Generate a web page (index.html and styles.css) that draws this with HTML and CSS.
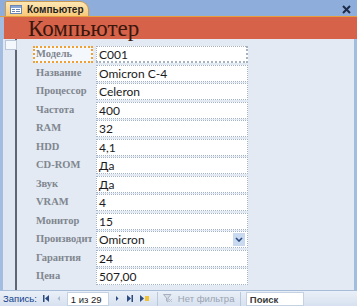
FILE: index.html
```html
<!DOCTYPE html>
<html>
<head>
<meta charset="utf-8">
<title>Компьютер</title>
<link rel="stylesheet" href="styles.css">
</head>
<body>
<div class="window">
  <div class="tabbar">
    <div class="tab">
      <svg class="tab-icon" width="12" height="9" viewBox="0 0 12 9">
        <rect x="0.5" y="0.5" width="11" height="8" fill="#fff" stroke="#6b86b3"/>
        <rect x="1" y="1" width="10" height="2" fill="#8aa6d4"/>
        <rect x="2" y="4" width="3" height="1" fill="#6b86b3"/>
        <rect x="6" y="4" width="4" height="1" fill="#6b86b3"/>
        <rect x="2" y="6" width="3" height="1" fill="#6b86b3"/>
        <rect x="6" y="6" width="4" height="1" fill="#6b86b3"/>
      </svg>
      <span>Компьютер</span>
    </div>
    <svg class="close" width="9" height="9" viewBox="0 0 9 9">
      <path d="M1 1 L8 8 M8 1 L1 8" stroke="#1e2b4a" stroke-width="2"/>
    </svg>
  </div>
  <div class="header">Компьютер</div>
  <div class="body">
    <div class="selector">
      <div class="selector-box"></div>
    </div>
    <div class="form">
      <div class="row"><div class="label active">Модель</div><div class="field first">C001</div></div>
      <div class="row"><div class="label">Название</div><div class="field">Omicron C-4</div></div>
      <div class="row"><div class="label">Процессор</div><div class="field">Celeron</div></div>
      <div class="row"><div class="label">Частота</div><div class="field">400</div></div>
      <div class="row"><div class="label">RAM</div><div class="field">32</div></div>
      <div class="row"><div class="label">HDD</div><div class="field">4,1</div></div>
      <div class="row"><div class="label">CD-ROM</div><div class="field">Да</div></div>
      <div class="row"><div class="label">Звук</div><div class="field">Да</div></div>
      <div class="row"><div class="label">VRAM</div><div class="field">4</div></div>
      <div class="row"><div class="label">Монитор</div><div class="field">15</div></div>
      <div class="row"><div class="label">Производит</div><div class="field combo">Omicron
        <span class="drop"><svg width="8" height="5" viewBox="0 0 8 5"><path d="M1 1 L4 4 L7 1" fill="none" stroke="#2a4a80" stroke-width="1.6"/></svg></span></div></div>
      <div class="row"><div class="label">Гарантия</div><div class="field">24</div></div>
      <div class="row"><div class="label">Цена</div><div class="field">507,00</div></div>
    </div>
  </div>
  <div class="navbar">
    <span class="nav-title">Запись:</span>
    <span class="nav-btn">
      <svg width="7" height="7" viewBox="0 0 7 7"><rect x="0" y="0" width="1.5" height="7" fill="#2a4a80"/><path d="M6 0 L2 3.5 L6 7 Z" fill="#2a4a80"/></svg>
    </span>
    <span class="nav-btn">
      <svg width="5" height="7" viewBox="0 0 5 7"><path d="M4 1 L1.5 3.5 L4 6 Z" fill="#a9b9d2"/></svg>
    </span>
    <span class="nav-box">1 из 29</span>
    <span class="nav-btn">
      <svg width="5" height="7" viewBox="0 0 5 7"><path d="M1 1 L3.5 3.5 L1 6 Z" fill="#2a4a80"/></svg>
    </span>
    <span class="nav-btn">
      <svg width="7" height="7" viewBox="0 0 7 7"><path d="M1 0 L5 3.5 L1 7 Z" fill="#2a4a80"/><rect x="5.5" y="0" width="1.5" height="7" fill="#2a4a80"/></svg>
    </span>
    <span class="nav-btn">
      <svg width="10" height="7" viewBox="0 0 10 7"><path d="M1 0 L5 3.5 L1 7 Z" fill="#2a4a80"/><rect x="6" y="1" width="4" height="5" fill="#f2c233"/></svg>
    </span>
    <span class="nav-sep"></span>
    <span class="filter">
      <svg width="10" height="9" viewBox="0 0 10 9"><path d="M0.5 0.5 H8 L5 4 V8 L3.5 7 V4 Z" fill="#d8dee8" stroke="#a7b0bf"/><path d="M6 5 L9 8 M9 5 L6 8" stroke="#b8bfcb" stroke-width="1"/></svg>
      Нет фильтра
    </span>
    <span class="nav-sep"></span>
    <span class="search">Поиск</span>
  </div>
</div>
</body>
</html>
```

FILE: styles.css
```css
* {
  box-sizing: border-box;
}

body {
  margin: 0;
  background: #ffffff;
}

.window {
  width: 357px;
  height: 306px;
  display: flex;
  flex-direction: column;
  background: #e3eaf3;
  overflow: hidden;
}

/* tab strip */
.tabbar {
  height: 17px;
  background: #8eaddb;
  display: flex;
  align-items: flex-end;
  justify-content: space-between;
  padding: 0 6px 0 5px;
  border-bottom: 1px solid #e59d3d;
}

.tab {
  height: 15px;
  width: 84px;
  display: flex;
  align-items: center;
  gap: 5px;
  padding-left: 4px;
  background: linear-gradient(#fde7b4, #f8c979);
  border: 1px solid #c99a54;
  border-bottom: none;
  border-radius: 2px 9px 0 0;
  font-family: "Liberation Sans", Arial, sans-serif;
  font-size: 10px;
  font-weight: bold;
  color: #1e1e1e;
}

.close {
  align-self: center;
  margin-top: 2px;
}

/* report header */
.header {
  height: 22px;
  background: #d6624a;
  padding-left: 24px;
  font-family: "Liberation Serif", "DejaVu Serif", serif;
  font-size: 23px;
  line-height: 23px;
  color: #3b170c;
  border-left: 4px solid #a3bde0;
}

/* detail */
.body {
  flex: 1;
  display: flex;
  border-left: 3px solid #a3bde0;
  border-right: 3px solid #a3bde0;
}

.selector {
  width: 14px;
  background: #dfe7f2;
  border-right: 2px solid #5f6670;
  padding: 1px 0 0 2px;
}

.selector-box {
  width: 12px;
  height: 10px;
  background: #f4f7fb;
  border: 1px solid #b9c6d8;
}

.form {
  flex: 1;
  padding: 7px 0 0 16px;
  display: grid;
  grid-template-columns: 60px 152px;
  grid-auto-rows: 18.5px;
  column-gap: 3px;
  align-content: start;
}

.row {
  display: contents;
}

.label {
  height: 17px;
  padding: 1px 0 0 2px;
  font-family: "Liberation Serif", "DejaVu Serif", serif;
  font-weight: bold;
  font-size: 10.5px;
  color: #80868f;
  white-space: nowrap;
  overflow: hidden;
  border: 1px solid transparent;
}

.label.active {
  border: 2px dotted #f0a030;
  padding: 0 0 0 1px;
  background: #f4f7fb;
}

.field {
  height: 17px;
  background: #ffffff;
  border: 1px dotted #a3b3c8;
  padding: 1px 0 0 2px;
  font-family: "Lato", "Open Sans", sans-serif;
  font-size: 12px;
  line-height: 14px;
  color: #1b1b1b;
  position: relative;
}

.field.first {
  border: 2px dotted #a7b2c0;
  border-left-width: 1px;
  border-top-width: 1px;
}

.drop {
  position: absolute;
  right: 2px;
  top: 1px;
  width: 12px;
  height: 13px;
  background: #c9d9f0;
  display: flex;
  align-items: center;
  justify-content: center;
}

/* navigation */
.navbar {
  height: 16px;
  background: linear-gradient(#eaf0f8, #d7e1ef);
  border-top: 1px solid #a7bcd9;
  display: flex;
  align-items: center;
  padding-left: 3px;
  font-family: "Liberation Sans", Arial, sans-serif;
  font-size: 9.5px;
}

.nav-title {
  color: #15428b;
  margin-right: 3px;
}

.nav-btn {
  display: flex;
  align-items: center;
  justify-content: center;
  padding: 0 3px;
  height: 14px;
}

.nav-box {
  width: 42px;
  height: 14px;
  background: #ffffff;
  border: 1px solid #c5d2e3;
  padding: 1px 0 0 3px;
  color: #1b1b1b;
  margin: 0 3px;
}

.nav-sep {
  width: 1px;
  height: 14px;
  background: #b9c8dc;
  margin: 0 5px;
}

.filter {
  display: flex;
  align-items: center;
  gap: 5px;
  color: #9aa4b2;
  width: 72px;
}

.search {
  width: 58px;
  height: 14px;
  background: #ffffff;
  border: 1px solid #c5d2e3;
  padding: 1px 0 0 3px;
  color: #3a3a3a;
  font-weight: bold;
}
```
